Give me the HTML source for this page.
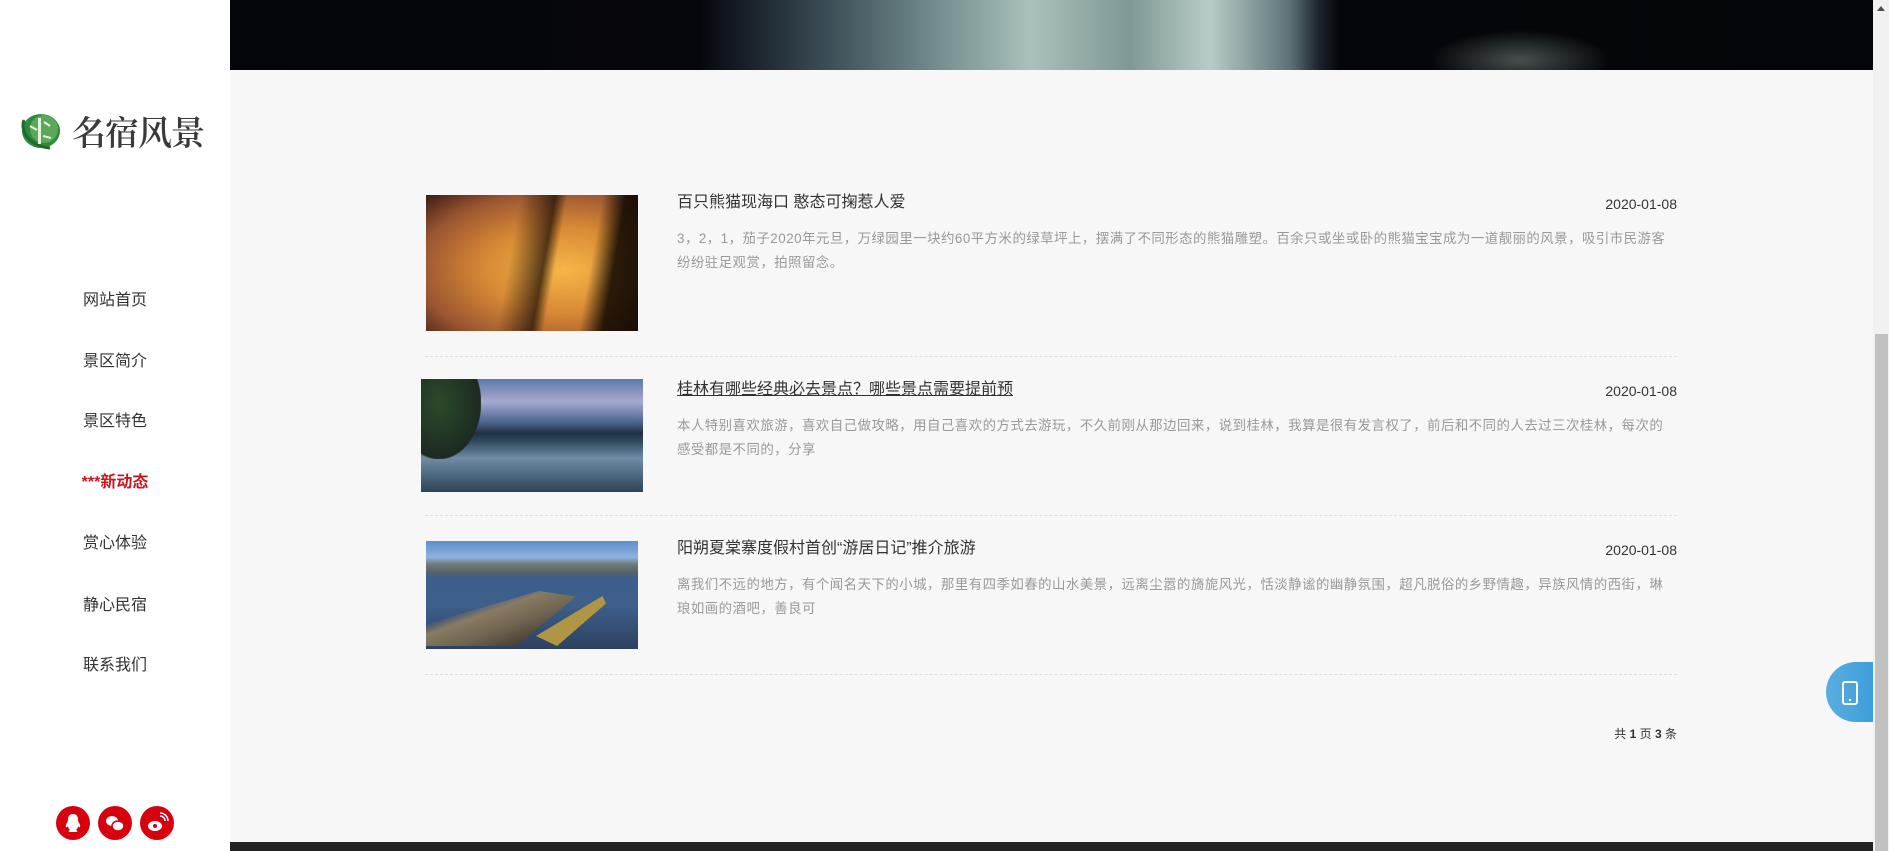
<!DOCTYPE html>
<html><head><meta charset="utf-8"><style>
*{margin:0;padding:0;box-sizing:border-box}
html,body{width:1889px;height:851px;overflow:hidden;background:#f7f7f7;font-family:"Liberation Sans","Noto Sans CJK SC",sans-serif}
.side{position:absolute;left:0;top:0;width:230px;height:851px;background:#fff}
.logo{position:absolute;left:20px;top:106px;display:flex;align-items:center}
.logo span{font-family:"Noto Serif CJK SC","Noto Sans CJK SC",serif;font-size:34px;color:#3a3a3a;font-weight:600;margin-left:10px;letter-spacing:-1px}
.nav a{position:absolute;left:0;width:230px;text-align:center;font-size:16px;color:#333;text-decoration:none;line-height:20px}
.nav a.on{color:#c8161d;font-weight:bold}
.soc{position:absolute;top:806px;width:34px;height:34px;border-radius:50%;background:#d7000f}
.banner{position:absolute;left:230px;top:0;width:1643px;height:70px;
background:
radial-gradient(ellipse 90px 30px at 1290px 60px,rgba(150,170,160,.45),transparent),
linear-gradient(90deg,#04050b 0,#06070d 470px,#1a222b 520px,#3d4f58 600px,#7f9a98 730px,#aac0bc 800px,#7f9896 900px,#b8ccc8 980px,#5c7276 1060px,#1b2129 1090px,#05060b 1110px,#04050a 1643px)}
.scroll{position:absolute;left:1873px;top:0;width:16px;height:851px;background:#f1f1f1}
.thumb{position:absolute;left:1875px;top:334px;width:13px;height:517px;background:#c1c1c1}
.foot{position:absolute;left:230px;top:842px;width:1643px;height:9px;background:#222}
.img{position:absolute}
.t{position:absolute;left:677px;font-size:16px;color:#333;line-height:20px}
.d{position:absolute;right:212px;font-size:14px;color:#333;line-height:20px}
.p{position:absolute;left:677px;width:995px;font-size:13.4px;letter-spacing:.5px;color:#999;line-height:24px}
.line{position:absolute;left:425px;width:1252px;border-top:1px dashed #ddd}
.pg{position:absolute;right:212px;top:725px;font-size:12px;color:#333}
.phone{position:absolute;left:1826px;top:662px;width:47px;height:60px;border-radius:30px 0 0 30px;background:linear-gradient(90deg,#5aaee0,#3e9ed9)}
</style></head><body>
<div class="side">
 <div class="logo">
  <svg width="42" height="38" viewBox="0 0 42 38"><ellipse cx="21" cy="19" rx="19" ry="17" fill="#2f8a3e"/><ellipse cx="24" cy="17" rx="14" ry="14" fill="#5ca85a"/><path d="M4 8 C0 18 8 34 30 36" stroke="#1d6a2c" stroke-width="3" fill="none"/><rect x="18" y="6" width="3" height="26" fill="#e8f2e0"/><path d="M10 14 L17 18 M24 10 L30 14 M23 24 L31 26" stroke="#e8f2e0" stroke-width="2"/></svg>
  <span>名宿风景</span>
 </div>
 <div class="nav">
  <a style="top:291px">网站首页</a>
  <a style="top:352px">景区简介</a>
  <a style="top:412px">景区特色</a>
  <a class="on" style="top:473px">***新动态</a>
  <a style="top:534px">赏心体验</a>
  <a style="top:596px">静心民宿</a>
  <a style="top:656px">联系我们</a>
 </div>
 <div class="soc" style="left:56px"><svg width="34" height="34"><path d="M17 8c-4 0-5 3-5 6 0 2-3 5-2 7 1 1 2-1 2-1 0 2 1 3 2 4-2 1-2 2 1 2h4c3 0 3-1 1-2 1-1 2-2 2-4 0 0 1 2 2 1 1-2-2-5-2-7 0-3-1-6-5-6z" fill="#fff"/></svg></div>
 <div class="soc" style="left:98px"><svg width="34" height="34"><ellipse cx="14" cy="15" rx="6" ry="5" fill="#fff"/><ellipse cx="20" cy="20" rx="6" ry="5" fill="#fff" stroke="#d7000f" stroke-width="1.5"/></svg></div>
 <div class="soc" style="left:140px"><svg width="34" height="34"><ellipse cx="15" cy="20" rx="7" ry="5" fill="#fff"/><circle cx="15" cy="20" r="2" fill="#d7000f"/><path d="M20 10a5 5 0 0 1 5 5M20 7a8 8 0 0 1 8 8" stroke="#fff" stroke-width="1.6" fill="none"/></svg></div>
</div>
<div class="banner"></div>

<div class="img" style="left:426px;top:195px;width:212px;height:136px;background:
linear-gradient(100deg,transparent 40%,rgba(20,10,5,.7) 55%,transparent 60%,transparent 75%,rgba(10,5,0,.85) 85%,rgba(10,5,0,.9) 100%),
radial-gradient(ellipse at 65% 55%,#f6b648,#d98a35 40%,#9a5531 75%,#3b1c14 100%)"></div>
<div class="t" style="top:193px">百只熊猫现海口 憨态可掬惹人爱</div>
<div class="d" style="top:194px">2020-01-08</div>
<div class="p" style="top:227px">3，2，1，茄子2020年元旦，万绿园里一块约60平方米的绿草坪上，摆满了不同形态的熊猫雕塑。百余只或坐或卧的熊猫宝宝成为一道靓丽的风景，吸引市民游客纷纷驻足观赏，拍照留念。</div>
<div class="line" style="top:356px"></div>

<div class="img" style="left:421px;top:379px;width:222px;height:113px;background:
linear-gradient(180deg,#5e7aa8 0,#a6a9cf 20%,#4e6690 38%,#203040 48%,#2e4a5e 55%,#6f8ca4 70%,#2c4458 100%);"><div style="position:absolute;left:0;top:0;width:60px;height:80px;background:radial-gradient(ellipse at 30% 30%,#2c4a2a,#1d2a22 70%,transparent 72%)"></div></div>
<div class="t" style="top:380px;text-decoration:underline">桂林有哪些经典必去景点？哪些景点需要提前预</div>
<div class="d" style="top:381px">2020-01-08</div>
<div class="p" style="top:414px">本人特别喜欢旅游，喜欢自己做攻略，用自己喜欢的方式去游玩，不久前刚从那边回来，说到桂林，我算是很有发言权了，前后和不同的人去过三次桂林，每次的感受都是不同的，分享</div>
<div class="line" style="top:515px"></div>

<div class="img" style="left:426px;top:541px;width:212px;height:108px;background:
linear-gradient(180deg,#5c8fcc 0,#8fb2de 15%,#6d7a78 22%,#51606a 30%,#3c5e8c 34%,#3d5f8a 60%,#2e4060 100%)"><div style="position:absolute;left:0;top:50px;width:150px;height:55px;background:linear-gradient(160deg,transparent 30%,#8a7b62 40%,#6f6450 60%,#4a3e30 80%);clip-path:polygon(0 60%,75% 0,100% 10%,60% 100%,0 100%)"></div><div style="position:absolute;left:110px;top:55px;width:70px;height:50px;background:#b09644;clip-path:polygon(0 80%,95% 0,100% 15%,30% 100%)"></div></div>
<div class="t" style="top:539px">阳朔夏棠寨度假村首创“游居日记”推介旅游</div>
<div class="d" style="top:540px">2020-01-08</div>
<div class="p" style="top:573px">离我们不远的地方，有个闻名天下的小城，那里有四季如春的山水美景，远离尘嚣的旖旎风光，恬淡静谧的幽静氛围，超凡脱俗的乡野情趣，异族风情的西街，琳琅如画的酒吧，善良可</div>
<div class="line" style="top:674px"></div>

<div class="pg">共 <b>1</b> 页 <b>3</b> 条</div>
<div class="phone"><svg width="47" height="60"><rect x="17" y="20" width="14" height="22" rx="2" stroke="#fff" stroke-width="2" fill="none"/><circle cx="24" cy="38" r="1.2" fill="#fff"/></svg></div>
<div class="foot"></div>
<div class="scroll"></div><div class="thumb"></div>
<div style="position:absolute;left:1877px;top:6px;width:0;height:0;border-left:4px solid transparent;border-right:4px solid transparent;border-bottom:5px solid #505050"></div>
</body></html>
